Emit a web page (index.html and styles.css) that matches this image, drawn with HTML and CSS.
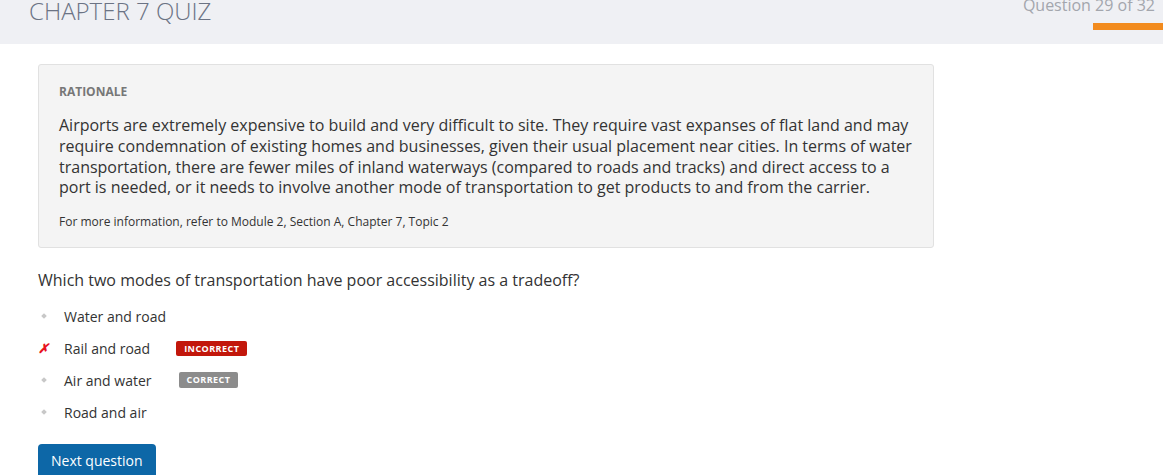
FILE: index.html
```html
<!DOCTYPE html>
<html>
<head>
<meta charset="utf-8">
<link rel="stylesheet" href="styles.css">
</head>
<body>
<header class="topbar">
  <h1 class="quiz-title">CHAPTER 7 QUIZ</h1>
  <div class="progress">
    <span class="progress-label">Question 29 of 32</span>
    <span class="progress-bar"></span>
  </div>
</header>
<main class="content">
  <section class="rationale">
    <h2 class="rationale-title">RATIONALE</h2>
    <p class="rationale-text">Airports are extremely expensive to build and very difficult to site. They require vast expanses of flat land and may require condemnation of existing homes and businesses, given their usual placement near cities. In terms of water transportation, there are fewer miles of inland waterways (compared to roads and tracks) and direct access to a port is needed, or it needs to involve another mode of transportation to get products to and from the carrier.</p>
    <p class="rationale-ref">For more information, refer to Module 2, Section A, Chapter 7, Topic 2</p>
  </section>
  <p class="question">Which two modes of transportation have poor accessibility as a tradeoff?</p>
  <ul class="options">
    <li class="option"><span class="marker"><span class="dot"></span></span><span class="option-text">Water and road</span></li>
    <li class="option"><span class="marker wrong">✗</span><span class="option-text">Rail and road</span><span class="badge badge-incorrect">INCORRECT</span></li>
    <li class="option"><span class="marker"><span class="dot"></span></span><span class="option-text">Air and water</span><span class="badge badge-correct">CORRECT</span></li>
    <li class="option"><span class="marker"><span class="dot"></span></span><span class="option-text">Road and air</span></li>
  </ul>
  <button class="next-btn">Next question</button>
</main>
</body>
</html>
```
FILE: styles.css
```css
html, body {
  margin: 0;
  padding: 0;
  background: #ffffff;
  font-family: "Open Sans", "Liberation Sans", sans-serif;
  color: #333333;
}

.topbar {
  height: 44px;
  background: #eff0f4;
  display: flex;
  justify-content: space-between;
  align-items: flex-start;
  padding-left: 29px;
  overflow: hidden;
}

.quiz-title {
  margin: 0;
  font-size: 24px;
  font-weight: 300;
  line-height: 22px;
  color: #6b7384;
}

.progress {
  display: flex;
  flex-direction: column;
  align-items: flex-end;
}

.progress-label {
  font-size: 16px;
  line-height: 10px;
  color: #a3a6ad;
  margin-right: 8px;
}

.progress-bar {
  display: block;
  width: 70px;
  height: 7px;
  margin-top: 13px;
  background: #f28b1e;
}

.content {
  padding-left: 38px;
  padding-top: 20px;
}

.rationale {
  width: 854px;
  background: #f4f4f4;
  border: 1px solid #e1e1e1;
  border-radius: 3px;
  padding: 19px 20px 17px 20px;
}

.rationale-title {
  margin: 0;
  font-size: 12px;
  line-height: 16px;
  font-weight: 700;
  color: #777777;
}

.rationale-text {
  margin: 15px 0 0;
  font-size: 16px;
  line-height: 20.8px;
  color: #333333;
}

.rationale-ref {
  margin: 16px 0 0;
  font-size: 12px;
  line-height: 16px;
  color: #333333;
}

.question {
  margin: 21px 0 0;
  font-size: 16px;
  line-height: 22px;
  color: #333333;
}

.options {
  list-style: none;
  margin: 9px 0 0;
  padding: 0;
}

.option {
  display: flex;
  align-items: center;
  height: 32px;
  font-size: 14px;
}

.marker {
  width: 26px;
  display: flex;
  align-items: center;
  justify-content: flex-start;
}

.dot {
  display: block;
  width: 4px;
  height: 4px;
  margin-left: 4px;
  background: #c8c8c8;
  transform: rotate(45deg);
}

.wrong {
  color: #e8141e;
  font-size: 13px;
  font-weight: 700;
  font-style: italic;
  line-height: 1;
}

.option-text {
  color: #333333;
}

.badge {
  display: inline-block;
  margin-left: 26px;
  padding: 0 8px;
  height: 15px;
  line-height: 15px;
  font-size: 9px;
  font-weight: 700;
  letter-spacing: 0.45px;
  color: #ffffff;
  border-radius: 2px;
}

.badge-incorrect {
  background: #c2170b;
}

.badge-correct {
  background: #8c8c8c;
  margin-left: 27px;
  height: 16px;
  line-height: 16px;
}

.next-btn {
  margin-top: 16px;
  font-family: "Open Sans", "Liberation Sans", sans-serif;
  font-size: 14px;
  line-height: 20px;
  color: #ffffff;
  background: #0d67a7;
  border: none;
  border-radius: 4px;
  padding: 7px 13px 9px;
}
```
